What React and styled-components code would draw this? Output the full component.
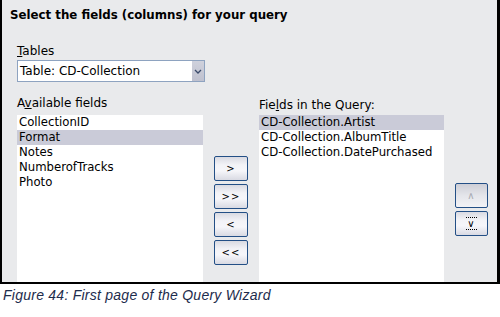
import styled, { createGlobalStyle } from "styled-components";

const Global = createGlobalStyle`
  html, body { margin: 0; padding: 0; background: #fff; }
  body { font-family: "DejaVu Sans", sans-serif; }
`;

const Dialog = styled.div`
  box-sizing: border-box;
  width: 500px;
  height: 284px;
  background: #e9eaec;
  border-left: 2px solid #000;
  border-right: 3px solid #000;
  border-bottom: 2px solid #000;
  overflow: hidden;
  display: flex;
  flex-direction: column;
`;

const Title = styled.h1`
  margin: 0;
  padding: 8px 8px 0;
  font-size: 11.8px;
  font-weight: bold;
  line-height: 15px;
  color: #000;
`;

const Body = styled.div`
  flex: 1;
  padding: 21px 0 0 15px;
  display: flex;
  flex-direction: column;
  min-height: 0;
`;

const Label = styled.label`
  display: block;
  font-size: 12px;
  line-height: 14px;
  color: #000;
  padding-top: ${(p) => p.$top || 0}px;
  u { text-decoration: underline; }
`;

const Combo = styled.div`
  box-sizing: border-box;
  margin-top: 2px;
  width: 188px;
  height: 22px;
  background: #fff;
  border: 1px solid #8ea3c0;
  display: flex;
  align-items: center;
`;

const ComboText = styled.span`
  flex: 1;
  padding-left: 2px;
  font-size: 12px;
  color: #000;
`;

const ComboButton = styled.span`
  width: 12px;
  height: 20px;
  background: linear-gradient(#cfd1dc, #bfc1cf);
  display: flex;
  align-items: center;
  justify-content: center;
`;

const Columns = styled.div`
  flex: 1;
  min-height: 0;
  margin-top: 14px;
  display: grid;
  grid-template-columns: 186px 34px 185px 33px;
  grid-template-rows: 19px 1fr;
  column-gap: 11px;
  row-gap: 0;
`;

const List = styled.ul`
  margin: 0;
  padding: 0;
  list-style: none;
  background: #fff;
`;

const Item = styled.li`
  height: 15px;
  line-height: 15px;
  padding-left: 2px;
  font-size: 11.7px;
  color: #000;
  background: ${(p) => (p.$selected ? "#cacbd8" : "transparent")};
  white-space: nowrap;
`;

const ButtonStack = styled.div`
  display: flex;
  flex-direction: column;
  gap: 3px;
  padding-top: ${(p) => p.$top}px;
`;

const MoveButton = styled.button`
  box-sizing: border-box;
  width: 100%;
  height: 25px;
  padding: 0;
  border: 1px solid #234f86;
  border-radius: 2px;
  background: linear-gradient(#d9dae2 0%, #f3f3f7 35%, #f6f6fa 60%, #d9dae3 100%);
  font-family: "DejaVu Sans", sans-serif;
  font-size: 10px;
  letter-spacing: 1px;
  color: ${(p) => (p.disabled ? "#a9abb3" : "#000")};
  display: flex;
  align-items: center;
  justify-content: center;
  ${(p) => p.disabled && "background: linear-gradient(#cdced6, #e4e5ea 50%, #f2f2f6);"}
`;

const Focus = styled.span`
  border-top: 1px dotted #000;
  border-bottom: 1px dotted #000;
  padding: 0 1px;
  line-height: 11px;
`;

const Caption = styled.p`
  margin: 3px 0 0 3px;
  font-family: "Liberation Sans", Arial, sans-serif;
  font-style: italic;
  font-size: 14px;
  letter-spacing: 0.25px;
  color: #1d2c4c;
`;

const available = ["CollectionID", "Format", "Notes", "NumberofTracks", "Photo"];
const chosen = ["CD-Collection.Artist", "CD-Collection.AlbumTitle", "CD-Collection.DatePurchased"];

export default function App() {
  return (
    <>
      <Global />
      <Dialog>
        <Title>Select the fields (columns) for your query</Title>
        <Body>
          <Label>
            <u>T</u>ables
          </Label>
          <Combo>
            <ComboText>Table: CD-Collection</ComboText>
            <ComboButton>
              <svg width="8" height="5" viewBox="0 0 8 5">
                <path d="M1 1 L4 4 L7 1" fill="none" stroke="#3a4a6a" strokeWidth="1.3" />
              </svg>
            </ComboButton>
          </Combo>
          <Columns>
            <Label>
              A<u>v</u>ailable fields
            </Label>
            <span />
            <Label $top={2}>
              Fie<u>l</u>ds in the Query:
            </Label>
            <span />
            <List>
              {available.map((f) => (
                <Item key={f} $selected={f === "Format"}>
                  {f}
                </Item>
              ))}
            </List>
            <ButtonStack $top={41}>
              <MoveButton>&gt;</MoveButton>
              <MoveButton>&gt;&gt;</MoveButton>
              <MoveButton>&lt;</MoveButton>
              <MoveButton>&lt;&lt;</MoveButton>
            </ButtonStack>
            <List>
              {chosen.map((f) => (
                <Item key={f} $selected={f === "CD-Collection.Artist"}>
                  {f}
                </Item>
              ))}
            </List>
            <ButtonStack $top={68}>
              <MoveButton disabled>∧</MoveButton>
              <MoveButton>
                <Focus>∨</Focus>
              </MoveButton>
            </ButtonStack>
          </Columns>
        </Body>
      </Dialog>
      <Caption>Figure 44: First page of the Query Wizard</Caption>
    </>
  );
}
